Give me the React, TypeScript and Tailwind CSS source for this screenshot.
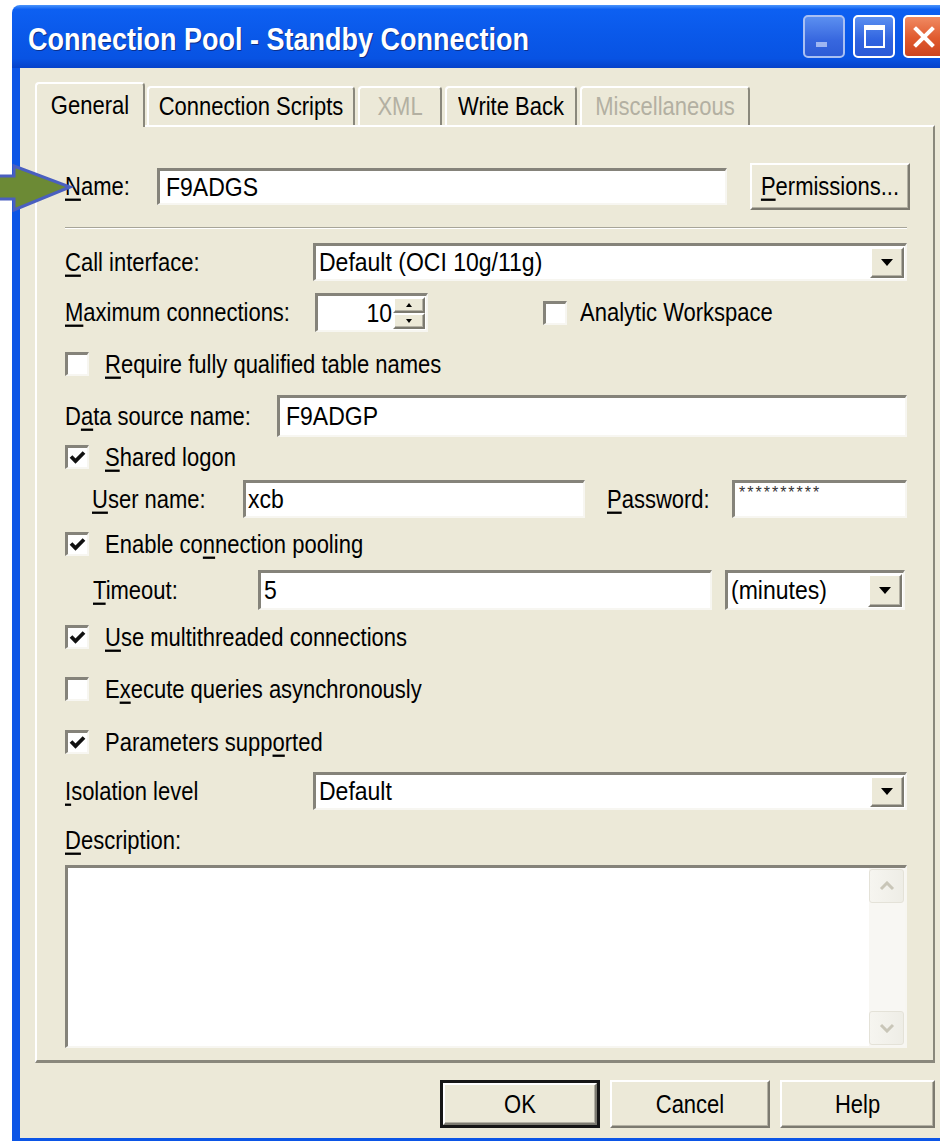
import React from "react";

// Classic 3D edges used by the dialog controls
const sunken =
  "border-t-[3px] border-l-[3px] border-r-2 border-b-2 border-t-[#85837a] border-l-[#85837a] border-r-[#f7f6f1] border-b-[#f7f6f1] bg-white";
const raised =
  "border-2 border-t-white border-l-white border-r-[#7c7a70] border-b-[#7c7a70] bg-[#ece9d8] shadow-[inset_-1px_-1px_0_#b4b1a4]";

function T({ children, className = "" }: { children: React.ReactNode; className?: string }) {
  return (
    <span className={`inline-block origin-center scale-y-[1.15] whitespace-nowrap ${className}`}>{children}</span>
  );
}

function U({ children }: { children: React.ReactNode }) {
  return <span className="underline decoration-2 underline-offset-[3px]">{children}</span>;
}

function Check({ on }: { on?: boolean }) {
  return (
    <span className={`flex h-[24px] w-[24px] shrink-0 items-center justify-center ${sunken}`}>
      {on && (
        <svg width="17" height="15" viewBox="0 0 17 15">
          <path d="M2 6.5 L6.5 11 L15 2.5" stroke="#111" strokeWidth="3.8" fill="none" />
        </svg>
      )}
    </span>
  );
}

function CheckRow({ on, children, className = "" }: { on?: boolean; children: React.ReactNode; className?: string }) {
  return (
    <div className={`flex h-[24px] items-center gap-[16px] ${className}`}>
      <Check on={on} />
      <T className="text-[22px]">{children}</T>
    </div>
  );
}

function DropArrow() {
  return (
    <svg width="12" height="7" viewBox="0 0 12 7">
      <path d="M0 0H12L6 7Z" fill="#000" />
    </svg>
  );
}

function Combo({ value, className = "" }: { value: string; className?: string }) {
  return (
    <div className={`flex items-stretch ${sunken} ${className}`}>
      <div className="flex flex-1 items-center pl-[3px]">
        <T className="text-[23px]">{value}</T>
      </div>
      <div className={`my-[1px] mr-[1px] flex w-[34px] items-center justify-center ${raised}`}>
        <DropArrow />
      </div>
    </div>
  );
}

function Field({ value, className = "" }: { value?: string; className?: string }) {
  return (
    <div className={`flex items-center pl-[6px] ${sunken} ${className}`}>
      {value && <T className="text-[23px]">{value}</T>}
    </div>
  );
}

function ScrollBtn({ up }: { up?: boolean }) {
  return (
    <div className="flex h-[34px] items-center justify-center rounded-[3px] border border-[#e4e2d8] bg-[linear-gradient(90deg,#f6f5f0,#eeede6)]">
      <svg width="16" height="10" viewBox="0 0 16 10">
        <path d={up ? "M2 8 L8 2 L14 8" : "M2 2 L8 8 L14 2"} stroke="#c9c6b8" strokeWidth="3" fill="none" />
      </svg>
    </div>
  );
}

function Tab({ label, w, active, disabled }: { label: string; w: string; active?: boolean; disabled?: boolean }) {
  return (
    <div
      className={`flex items-center justify-center rounded-t-[4px] border-t-2 border-l-2 border-r-2 border-t-white border-l-white border-r-[#8a887c] bg-[#ece9d8] ${w} ${
        active ? "relative z-10 -mb-[2px] h-[45px]" : "h-[39px]"
      }`}
    >
      <T className={`text-[22px] ${disabled ? "text-[#b3b0a2]" : "text-black"}`}>{label}</T>
    </div>
  );
}

export default function App() {
  return (
    <div className="relative h-[1141px] w-[940px] overflow-hidden bg-white pt-[5px] font-['Liberation_Sans',Arial,sans-serif] text-black">
      <div className="ml-[12px] flex h-[1136px] w-[946px] flex-col">
        {/* Title bar */}
        <div className="flex h-[63px] shrink-0 items-center rounded-t-[8px] bg-[linear-gradient(180deg,#4a94fb_0%,#0d60f2_7%,#0a59ea_45%,#0853e3_85%,#0642c9_100%)] pl-[16px] pr-[13px]">
          <span className="pt-[8px]">
            <T className="text-[27px] font-bold text-white [text-shadow:1px_1px_0_#0c2f8a]">
              Connection Pool - Standby Connection
            </T>
          </span>
          <div className="ml-auto flex gap-[8px]">
            <div className="flex h-[43px] w-[42px] items-end rounded-[5px] border-2 border-[#a9c0f3] bg-[linear-gradient(180deg,#5b8ff0,#3767df_60%,#2d5cd6)] pb-[9px] pl-[11px]">
              <div className="h-[5px] w-[11px] bg-[#9fb6f2]" />
            </div>
            <div className="flex h-[43px] w-[42px] items-center justify-center rounded-[5px] border-2 border-white bg-[linear-gradient(180deg,#5b8ff0,#2f63e0_60%,#2a59d6)]">
              <div className="h-[23px] w-[21px] border-2 border-t-[5px] border-white" />
            </div>
            <div className="flex h-[43px] w-[42px] items-center justify-center rounded-[5px] border-2 border-white bg-[linear-gradient(180deg,#f08a62,#e05a2e_55%,#cc4420)]">
              <svg width="22" height="22" viewBox="0 0 22 22">
                <path d="M3 3 L19 19 M19 3 L3 19" stroke="#fff" strokeWidth="4" strokeLinecap="square" />
              </svg>
            </div>
          </div>
        </div>

        {/* Dialog body */}
        <div className="flex flex-1 flex-col border-b-[3px] border-l-[8px] border-r-[8px] border-[#0b55e6] bg-[#ece9d8] px-[15px] pt-[14px]">
          {/* Tabs */}
          <div className="flex h-[43px] items-end">
            <Tab label="General" w="w-[110px]" active />
            <div className="w-[2px]" />
            <Tab label="Connection Scripts" w="w-[208px]" />
            <div className="w-[3px]" />
            <Tab label="XML" w="w-[84px]" disabled />
            <div className="w-[3px]" />
            <Tab label="Write Back" w="w-[132px]" />
            <div className="w-[3px]" />
            <Tab label="Miscellaneous" w="w-[170px]" disabled />
          </div>

          {/* Tab page */}
          <div className="flex h-[938px] flex-col border-2 border-b-[3px] border-t-white border-l-white border-r-[#8a887c] border-b-[#8a887c] pl-[28px] pr-[26px] text-[22px]">
            {/* Name */}
            <div className="mt-[36px] flex h-[47px] items-center">
              <div className="w-[92px]">
                <T>
                  <U>N</U>ame:
                </T>
              </div>
              <Field value="F9ADGS" className="h-[37px] w-[570px]" />
              <button className={`-mr-[3px] ml-[23px] flex h-[47px] w-[160px] items-center justify-center ${raised}`}>
                <T className="text-[22px]">
                  <U>P</U>ermissions...
                </T>
              </button>
            </div>

            <div className="mt-[17px] h-[2px] border-t border-b border-t-[#a7a598] border-b-white" />

            {/* Call interface */}
            <div className="mt-[14px] flex h-[38px] items-center">
              <div className="w-[248px]">
                <T>
                  <U>C</U>all interface:
                </T>
              </div>
              <Combo value="Default (OCI 10g/11g)" className="h-[38px] flex-1" />
            </div>

            {/* Maximum connections */}
            <div className="mt-[12px] flex h-[39px] items-center">
              <div className="w-[250px]">
                <T>
                  <U>M</U>aximum connections:
                </T>
              </div>
              <div className={`flex h-[39px] w-[113px] items-stretch ${sunken}`}>
                <div className="flex flex-1 items-center justify-end pr-[1px]">
                  <T className="text-[23px]">10</T>
                </div>
                <div className="my-[1px] mr-[1px] flex w-[32px] flex-col">
                  <div className={`flex flex-1 items-center justify-center ${raised}`}>
                    <svg width="6" height="4" viewBox="0 0 6 4">
                      <path d="M0 4H6L3 0Z" fill="#000" />
                    </svg>
                  </div>
                  <div className={`flex flex-1 items-center justify-center ${raised}`}>
                    <svg width="6" height="4" viewBox="0 0 6 4">
                      <path d="M0 0H6L3 4Z" fill="#000" />
                    </svg>
                  </div>
                </div>
              </div>
              <div className="ml-[115px] flex items-center gap-[13px]">
                <Check />
                <T>Analytic Workspace</T>
              </div>
            </div>

            <CheckRow className="mt-[20px]">
              <U>R</U>equire fully qualified table names
            </CheckRow>

            {/* Data source */}
            <div className="mt-[19px] flex h-[42px] items-center">
              <div className="w-[212px]">
                <T>
                  D<U>a</U>ta source name:
                </T>
              </div>
              <Field value="F9ADGP" className="h-[42px] flex-1" />
            </div>

            <CheckRow on className="mt-[8px]">
              <U>S</U>hared logon
            </CheckRow>

            {/* User / password */}
            <div className="mt-[11px] flex h-[38px] items-center pl-[27px]">
              <div className="w-[151px]">
                <T>
                  <U>U</U>ser name:
                </T>
              </div>
              <div className={`flex h-[38px] w-[342px] items-center pl-[2px] ${sunken}`}>
                <T className="text-[23px]">xcb</T>
              </div>
              <div className="ml-[22px] w-[125px]">
                <T>
                  <U>P</U>assword:
                </T>
              </div>
              <div className={`flex h-[38px] flex-1 items-start pl-[4px] pt-[2px] ${sunken}`}>
                <span className="text-[16px] leading-none tracking-[2px] text-[#333]">**********</span>
              </div>
            </div>

            <CheckRow on className="mt-[14px]">
              Enable co<U>n</U>nection pooling
            </CheckRow>

            {/* Timeout */}
            <div className="mt-[14px] flex h-[40px] items-center pl-[28px]">
              <div className="w-[165px]">
                <T>
                  <U>T</U>imeout:
                </T>
              </div>
              <div className={`flex h-[40px] w-[454px] items-center pl-[3px] ${sunken}`}>
                <T className="text-[23px]">5</T>
              </div>
              <Combo value="(minutes)" className="ml-[13px] h-[40px] w-[180px]" />
            </div>

            <CheckRow on className="mt-[15px]">
              <U>U</U>se multithreaded connections
            </CheckRow>
            <CheckRow className="mt-[28px]">
              E<U>x</U>ecute queries asynchronously
            </CheckRow>
            <CheckRow on className="mt-[29px]">
              Parameters supp<U>o</U>rted
            </CheckRow>

            {/* Isolation level */}
            <div className="mt-[18px] flex h-[38px] items-center">
              <div className="w-[248px]">
                <T>
                  <U>I</U>solation level
                </T>
              </div>
              <Combo value="Default" className="h-[38px] flex-1" />
            </div>

            <div className="mt-[18px] flex h-[24px] items-center">
              <T>
                <U>D</U>escription:
              </T>
            </div>

            {/* Description box */}
            <div className={`mt-[13px] flex h-[183px] ${sunken}`}>
              <div className="flex-1" />
              <div className="flex w-[36px] flex-col justify-between bg-[#f8f7f3] py-[1px] pr-[1px]">
                <ScrollBtn up />
                <ScrollBtn />
              </div>
            </div>
          </div>

          {/* Dialog buttons */}
          <div className="mt-[17px] flex h-[48px] justify-end gap-[10px]">
            <div className="flex w-[160px] border-[3px] border-[#161616]">
              <button className={`flex flex-1 items-center justify-center ${raised}`}>
                <T className="text-[22px]">OK</T>
              </button>
            </div>
            <button className={`flex w-[160px] items-center justify-center ${raised}`}>
              <T className="text-[22px]">Cancel</T>
            </button>
            <button className={`flex w-[155px] items-center justify-center ${raised}`}>
              <T className="text-[22px]">Help</T>
            </button>
          </div>
        </div>
      </div>

      {/* Callout arrow pointing at the Name field */}
      <svg className="absolute left-0 top-[150px]" width="80" height="70" viewBox="0 0 80 70">
        <path
          d="M-4 26 L14 26 L14 16 L70 37 L14 60 L14 49 L-4 49 Z"
          fill="#6c8a35"
          stroke="#4a5fc0"
          strokeWidth="3"
          strokeLinejoin="miter"
        />
      </svg>
    </div>
  );
}
